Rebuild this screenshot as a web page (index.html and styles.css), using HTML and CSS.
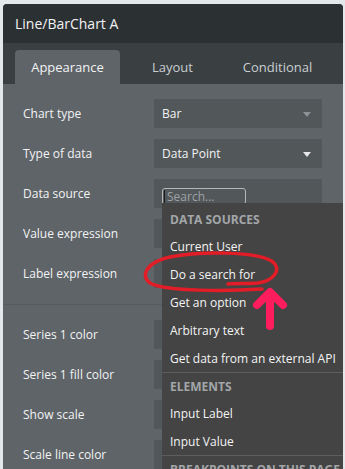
FILE: index.html
```html
<!DOCTYPE html>
<html lang="en">
<head>
  <meta charset="UTF-8">
  <meta name="viewport" content="width=device-width, initial-scale=1.0">
  <title>Line/BarChart A</title>
  <link rel="stylesheet" href="styles.css">
</head>
<body>
  <div class="panel">
    <div class="panel-header">Line/BarChart A</div>

    <div class="tabs">
      <div class="tab active">Appearance</div>
      <div class="tab">Layout</div>
      <div class="tab">Conditional</div>
    </div>

    <div class="props">
      <div class="row">
        <span class="label">Chart type</span>
        <div class="field select dim">Bar</div>
      </div>
      <div class="row">
        <span class="label">Type of data</span>
        <div class="field select">Data Point</div>
      </div>
      <div class="row">
        <span class="label">Data source</span>
        <div class="field">
          <div class="search"><span class="cursor"></span>Search...</div>
        </div>
      </div>
      <div class="row">
        <span class="label">Value expression</span>
        <div class="field"></div>
      </div>
      <div class="row">
        <span class="label">Label expression</span>
        <div class="field"></div>
      </div>

      <div class="divider"></div>

      <div class="row">
        <span class="label">Series 1 color</span>
        <div class="field"></div>
      </div>
      <div class="row">
        <span class="label">Series 1 fill color</span>
        <div class="field"></div>
      </div>
      <div class="row">
        <span class="label">Show scale</span>
        <div class="field"></div>
      </div>
      <div class="row">
        <span class="label">Scale line color</span>
        <div class="field"></div>
      </div>
    </div>

    <!-- data source menu, open over the rows -->
    <div class="menu">
      <div class="menu-head">Data sources</div>
      <div class="menu-item">Current User</div>
      <div class="menu-item">Do a search for</div>
      <div class="menu-item">Get an option</div>
      <div class="menu-item">Arbitrary text</div>
      <div class="menu-item">Get data from an external API</div>
      <div class="menu-sep"></div>
      <div class="menu-head">Elements</div>
      <div class="menu-item">Input Label</div>
      <div class="menu-item">Input Value</div>
      <div class="menu-sep"></div>
      <div class="menu-head">Breakpoints on this page</div>
    </div>

    <!-- hand drawn markup on top of the screenshot -->
    <svg class="markup" width="343" height="469" viewBox="3 4 343 469">
      <path d="M262 289 C230 291 166 292 150 283 C140 276 146 262 170 257 C200 251 258 251 273 262 C282 270 273 281 258 283 C248 284 236 283 228 284"
            fill="none" stroke="#e31d27" stroke-width="3.5" stroke-linecap="round" stroke-linejoin="round"/>
      <path d="M270 326 L270 295 M257 305 L270 292 L283 305"
            fill="none" stroke="#ff1d5e" stroke-width="8" stroke-linecap="round" stroke-linejoin="round"/>
    </svg>
  </div>
</body>
</html>
```

FILE: styles.css
```css
:root {
  --head-bg: #2b3033;
  --tabs-bg: #3a3f42;
  --body-bg: #5f6468;
  --field-bg: #52575a;
  --menu-bg: #444444;
  --text: #f2f3f4;
  --muted: #c9ced1;
}

body {
  margin: 0;
  background-color: #e4e8ea;
  font-family: 'Open Sans', 'DejaVu Sans', sans-serif;
  color: var(--text);
}

.panel {
  position: relative;
  margin: 4px 2px 0 3px;
  height: 465px;
  overflow: hidden;
  background-color: var(--body-bg);
  border-radius: 4px 4px 0 0;
}

.panel-header {
  height: 39px;
  padding-left: 12px;
  display: flex;
  align-items: center;
  background-color: var(--head-bg);
  font-size: 14px;
}

.tabs {
  height: 34px;
  padding: 7px 0 0 12px;
  display: flex;
  background-color: var(--tabs-bg);
}

.tab {
  width: 105px;
  display: flex;
  align-items: center;
  justify-content: center;
  font-size: 13px;
  color: var(--muted);
}

.tab.active {
  background-color: var(--body-bg);
  border-radius: 4px 4px 0 0;
  color: var(--text);
}

.props {
  padding: 15px 21px 0 20px;
  display: flex;
  flex-direction: column;
  gap: 11px;
}

.row {
  height: 29px;
  display: flex;
  align-items: center;
}

.label {
  width: 131px;
  font-size: 12px;
}

.field {
  position: relative;
  flex: 1;
  height: 29px;
  box-sizing: border-box;
  padding-left: 8px;
  display: flex;
  align-items: center;
  background-color: var(--field-bg);
  font-size: 12px;
}

.select::after {
  content: "";
  position: absolute;
  right: 11px;
  top: 13px;
  border-left: 4px solid transparent;
  border-right: 4px solid transparent;
  border-top: 5px solid #e6e8ea;
}

.select.dim::after {
  border-top-color: #8d9296;
}

.search {
  width: 84px;
  height: 17px;
  box-sizing: border-box;
  margin-top: 6px;
  padding-left: 1px;
  display: flex;
  align-items: center;
  border: 1px solid #b4b8bb;
  border-radius: 3px;
  color: #9ea2a5;
  font-size: 12px;
}

.cursor {
  width: 1px;
  height: 13px;
  margin-right: 2px;
  background-color: #1c1c1c;
}

.divider {
  height: 1px;
  margin: 5px -21px 4px -20px;
  background-color: #565b5f;
}

.menu {
  position: absolute;
  left: 159px;
  right: 0;
  top: 199px;
  bottom: 0;
  padding-top: 3px;
  background-color: var(--menu-bg);
}

.menu-head {
  height: 26px;
  padding-left: 8px;
  display: flex;
  align-items: center;
  font-size: 12px;
  font-weight: bold;
  text-transform: uppercase;
  white-space: nowrap;
  color: #a2a6a9;
}

.menu-item {
  height: 28px;
  padding-left: 8px;
  display: flex;
  align-items: center;
  font-size: 12px;
  white-space: nowrap;
  color: #f4f4f4;
}

.menu-sep {
  height: 1px;
  background-color: #5c5e60;
}

.markup {
  position: absolute;
  left: 0;
  top: 0;
}
```
